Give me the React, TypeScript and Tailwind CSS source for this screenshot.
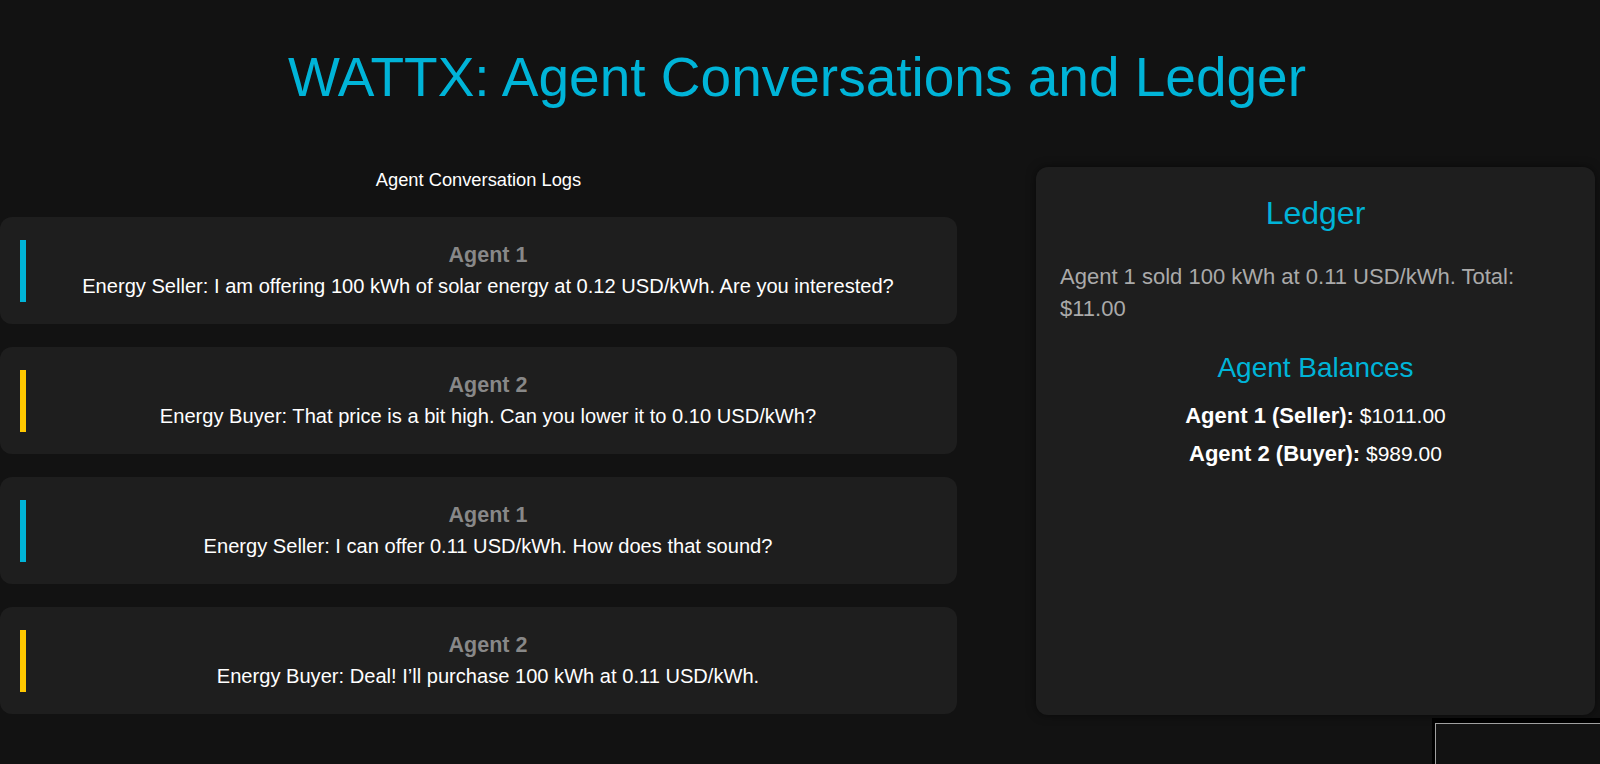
const messages = [
  {
    agent: "Agent 1",
    text: "Energy Seller: I am offering 100 kWh of solar energy at 0.12 USD/kWh. Are you interested?",
    role: "seller",
  },
  {
    agent: "Agent 2",
    text: "Energy Buyer: That price is a bit high. Can you lower it to 0.10 USD/kWh?",
    role: "buyer",
  },
  {
    agent: "Agent 1",
    text: "Energy Seller: I can offer 0.11 USD/kWh. How does that sound?",
    role: "seller",
  },
  {
    agent: "Agent 2",
    text: "Energy Buyer: Deal! I\u2019ll purchase 100 kWh at 0.11 USD/kWh.",
    role: "buyer",
  },
];

const balances = [
  { label: "Agent 1 (Seller):", value: "$1011.00" },
  { label: "Agent 2 (Buyer):", value: "$989.00" },
];

function MessageCard({ agent, text, role }: (typeof messages)[number]) {
  return (
    <div className="rounded-[12px] bg-[#1e1e1e] pt-[23px] pr-[20px] pb-[22px] pl-[20px]">
      <div
        className={`border-l-[6px] pl-[13px] text-center ${
          role === "seller" ? "border-[#00b4d8]" : "border-[#ffc800]"
        }`}
      >
        <p className="text-[21.5px] leading-[31px] font-bold text-[#888888]">{agent}</p>
        <p className="text-[20.1px] leading-[31px] text-white">{text}</p>
      </div>
    </div>
  );
}

export default function App() {
  return (
    <div
      className="relative min-h-screen overflow-hidden bg-[#121212]"
      style={{ fontFamily: '"Liberation Sans", Arial, sans-serif' }}
    >
      <h1 className="w-[1594px] pt-[46px] text-center text-[55px] leading-[63px] font-normal text-[#00b4d8]">
        WATTX: Agent Conversations and Ledger
      </h1>

      <div className="mt-[58px] flex w-[1595px] flex-row items-start gap-[79px]">
        {/* conversation logs */}
        <div className="flex w-[957px] flex-col">
          <h2 className="mt-[2px] text-center text-[18.3px] leading-[22px] text-white">
            Agent Conversation Logs
          </h2>
          <div className="mt-[26px] flex flex-col gap-[23px]">
            {messages.map((m, i) => (
              <MessageCard key={i} {...m} />
            ))}
          </div>
        </div>

        {/* ledger */}
        <div className="h-[548px] w-[559px] rounded-[12px] bg-[#1e1e1e] px-[24px] pt-[26px] shadow-[0_0_10px_rgba(0,0,0,0.5)]">
          <h2 className="text-center text-[32px] leading-[40px] text-[#00b4d8]">Ledger</h2>
          <p className="mt-[28px] text-[22px] leading-[32px] text-[#aaaaaa]">
            Agent 1 sold 100 kWh at 0.11 USD/kWh. Total: $11.00
          </p>
          <h3 className="mt-[26px] text-center text-[28px] leading-[34px] text-[#00b4d8]">
            Agent Balances
          </h3>
          <div className="mt-[12px] flex flex-col text-center text-[21px] leading-[38px] text-white">
            {balances.map((b) => (
              <p key={b.label}>
                <span className="text-[22px] font-bold">{b.label}</span> {b.value}
              </p>
            ))}
          </div>
        </div>
      </div>

      {/* corner widget */}
      <div className="absolute top-[718px] right-0 bottom-0 left-[1432px] bg-black pt-[5px] pl-[3px]">
        <div className="h-full border-t border-l border-[#a0a0a0] bg-[#121212]" />
      </div>
    </div>
  );
}
